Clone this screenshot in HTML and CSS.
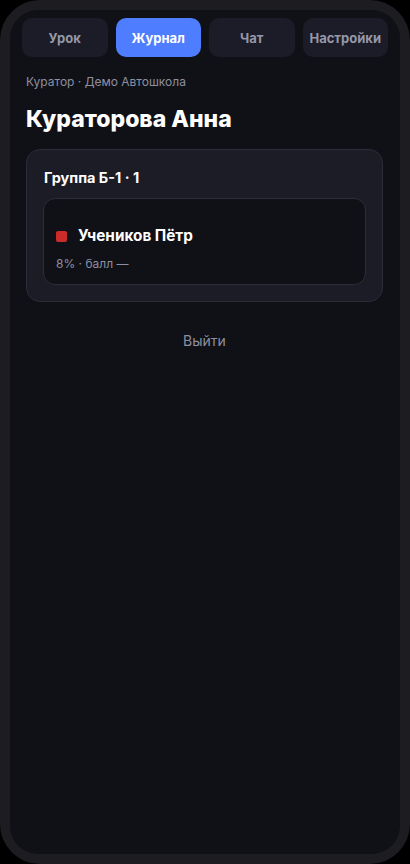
FILE: index.html
```html
<!DOCTYPE html>
<html lang="ru">
<head>
<meta charset="utf-8">
<link rel="stylesheet" href="styles.css">
</head>
<body>
<div class="phone">
  <div class="screen">
    <nav class="tabs">
      <div class="tab">Урок</div>
      <div class="tab active">Журнал</div>
      <div class="tab">Чат</div>
      <div class="tab">Настройки</div>
    </nav>
    <main class="content">
      <div class="sub">Куратор · Демо Автошкола</div>
      <h1 class="title">Кураторова Анна</h1>
      <section class="card">
        <div class="group">Группа Б-1 · 1</div>
        <div class="student">
          <div class="name-row"><span class="dot"></span><span class="name">Учеников Пётр</span></div>
          <div class="meta">8% · балл —</div>
        </div>
      </section>
      <div class="logout">Выйти</div>
    </main>
  </div>
</div>
</body>
</html>
```
FILE: styles.css
```css
* { box-sizing: border-box; }
html, body { margin: 0; padding: 0; background: #000; }
body { font-family: Inter, "Noto Sans", sans-serif; width: 410px; height: 864px; }
.phone {
  width: 410px; height: 864px;
  background: #1c1c21;
  border-radius: 40px;
  padding: 10px;
}
.screen {
  width: 100%; height: 100%;
  background: #101116;
  border-radius: 28px;
  padding: 8px 12px 0;
}
.tabs { display: grid; grid-template-columns: repeat(4, 1fr); gap: 8px; }
.tab {
  height: 39px; border-radius: 10px;
  background: #1b1c27; color: #9697a7;
  font-size: 13px; font-weight: 700;
  display: flex; align-items: center; justify-content: center;
}
.tab.active { background: #4f7dff; color: #fff; }
.content { padding: 0 4px; }
.sub { margin-top: 17px; font-size: 12px; color: #8d8fa0; line-height: 16px; }
.title { margin: 14px 0 0; font-size: 23px; font-weight: 800; color: #fff; line-height: 30px; }
.card {
  margin-top: 15px; width: 357px;
  background: #1b1c26; border: 1px solid #2a2c39; border-radius: 14px;
  padding: 19px 16px 16px;
}
.group { font-size: 14.5px; font-weight: 700; color: #fff; line-height: 18px; padding-left: 1px; }
.student {
  margin-top: 11px;
  background: #101117; border: 1px solid #2a2d3b; border-radius: 12px;
  padding: 27px 12px 12px;
}
.name-row { display: flex; align-items: center; gap: 11px; }
.dot { width: 11px; height: 11px; border-radius: 2px; background: #cc2b2b; }
.name { font-size: 15.3px; font-weight: 700; color: #fff; line-height: 20px; }
.meta { margin-top: 10px; font-size: 12px; color: #8d8fa0; line-height: 16px; }
.logout { margin-top: 30px; text-align: center; font-size: 14px; color: #8d8fa0; line-height: 18px; width: 357px; }
```
